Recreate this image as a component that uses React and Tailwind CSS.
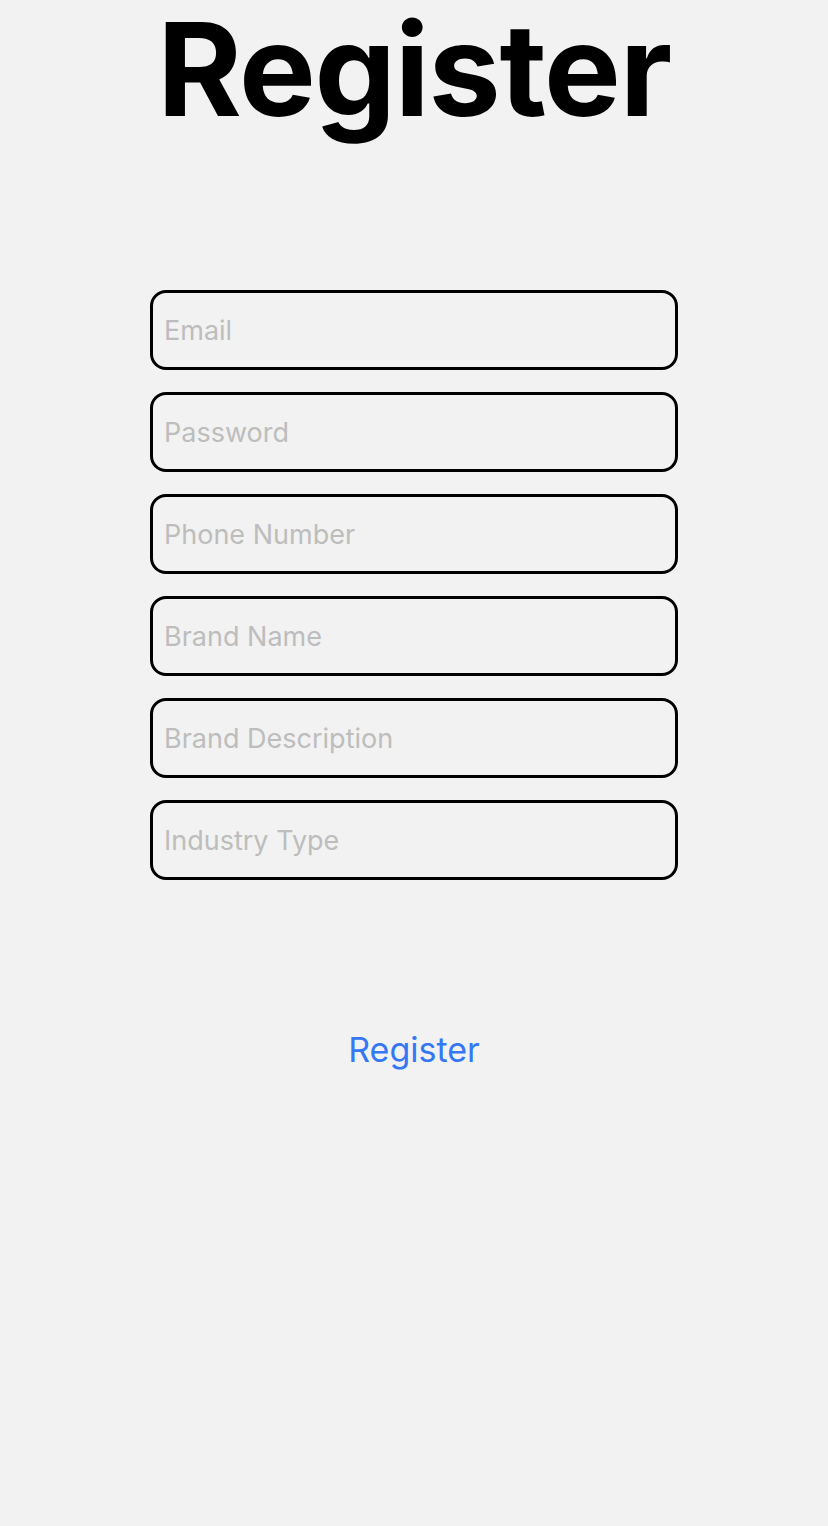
import React from "react";

const fields = [
  "Email",
  "Password",
  "Phone Number",
  "Brand Name",
  "Brand Description",
  "Industry Type",
];

export default function App() {
  return (
    <div
      className="min-h-[1526px] w-full bg-[#f2f2f2] flex flex-col items-center"
      style={{ fontFamily: "Inter, 'Liberation Sans', sans-serif" }}
    >
      <h1 className="text-[129px] font-bold leading-[139px] tracking-[-0.01em] text-black">
        Register
      </h1>

      <div className="mt-[151px] flex flex-col gap-[22px] w-[528px]">
        {fields.map((label) => (
          <input
            key={label}
            placeholder={label}
            className="h-[80px] w-full rounded-[16px] border-[3px] border-black bg-transparent px-[11px] text-[27px] text-black placeholder:text-[#bdbdbd] outline-none"
          />
        ))}
      </div>

      <button className="mt-[153px] text-[34px] text-[#3478f6] leading-none">
        Register
      </button>
    </div>
  );
}
